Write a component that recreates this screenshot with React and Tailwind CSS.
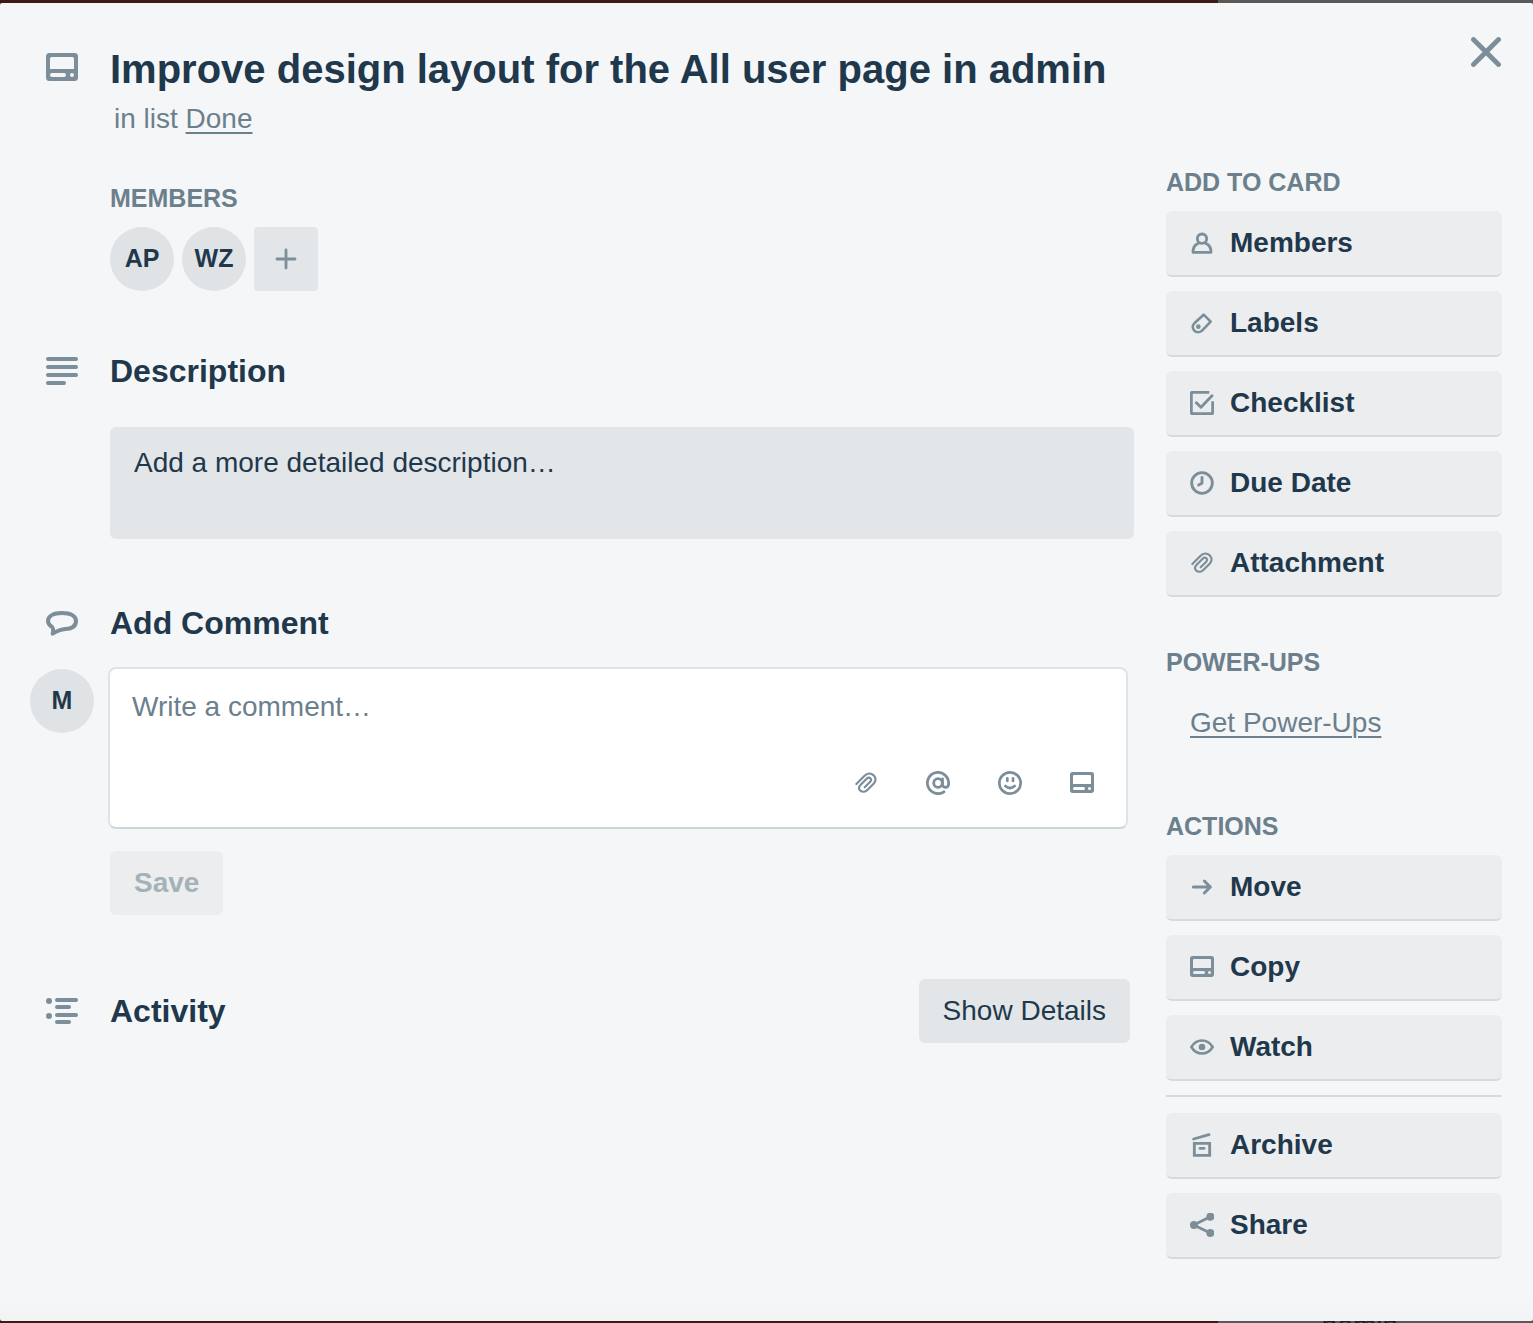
import React from "react";

const Glyph = ({ box = "0 0 72 72", className = "size-6", weight = 8.5, children }) => (
  <svg
    viewBox={box}
    className={`${className} shrink-0 text-[#7b8e99]`}
    fill="none"
    stroke="currentColor"
    strokeWidth={weight}
    strokeLinecap="round"
    strokeLinejoin="round"
    aria-hidden="true"
  >
    {children}
  </svg>
);

const CardIcon = ({ className, box = "0 -1.333 32 32" }) => (
  <Glyph box={box} className={className}>
    <path
      fill="currentColor"
      stroke="none"
      fillRule="evenodd"
      d="M3.500 0H28.500a3.500 3.500 0 0 1 3.500 3.500V24.500a3.500 3.500 0 0 1-3.500 3.500H3.500a3.500 3.500 0 0 1-3.500-3.500V3.500a3.500 3.500 0 0 1 3.500-3.500ZM5.500 4A1.500 1.500 0 0 0 4 5.500V16H28V5.500A1.500 1.500 0 0 0 26.500 4ZM6 20a2 2 0 0 0 0 4H18a2 2 0 0 0 0-4ZM26 20a2 2 0 1 0 0 4a2 2 0 1 0 0-4Z"
    />
  </Glyph>
);

const ClipIcon = () => (
  <Glyph weight={6.5}>
    <path d="M7 39L31 15C40 6 51 6 59 13C67 21 66 31 59 38L40 57C34 63 25 64 19 59C13 53 15 46 20 41L38 23C42 19 46 19 49 22C52 25 52 29 48 33L32 49" />
  </Glyph>
);

const MemberIcon = () => (
  <Glyph weight={8.5}>
    <circle cx="36" cy="23" r="14" />
    <path d="M25 37C14 41 9 52 9 64H63C63 52 58 41 47 37" />
  </Glyph>
);

const LabelIcon = () => (
  <Glyph weight={8}>
    <path d="M41 11L62 32L37 58C30 65 20 65 13 59C7 52 7 43 13 37Z" />
    <circle cx="25" cy="47" r="7" fill="currentColor" stroke="none" />
  </Glyph>
);

const ChecklistIcon = () => (
  <Glyph>
    <path strokeLinecap="butt" d="M58 4H7Q4 4 4 7V65Q4 68 7 68H65Q68 68 68 65V31" />
    <path d="M19 35L33 49L66 14" />
  </Glyph>
);

const ClockIcon = () => (
  <Glyph>
    <circle cx="36" cy="36" r="31" />
    <path d="M36 19V37L26 42" />
  </Glyph>
);

const MoveIcon = () => (
  <Glyph weight={9}>
    <path d="M10 36H61M43 18L61 36L43 54" />
  </Glyph>
);

const WatchIcon = () => (
  <Glyph weight={8}>
    <path d="M4 36C20 10 52 10 68 36C52 62 20 62 4 36Z" />
    <circle cx="36" cy="36" r="10" fill="currentColor" stroke="none" />
  </Glyph>
);

const ArchiveIcon = () => (
  <Glyph>
    <path d="M11 18L57 5" />
    <path strokeLinejoin="miter" d="M13 31H59V67H13Z" />
    <path d="M30 46H42" />
  </Glyph>
);

const ShareIcon = () => (
  <Glyph>
    <path d="M61 11L11 36L61 60" />
    <g fill="currentColor" stroke="none">
      <circle cx="61" cy="11" r="12" />
      <circle cx="12" cy="36" r="12" />
      <circle cx="61" cy="60" r="12" />
    </g>
  </Glyph>
);

const AtIcon = () => (
  <Glyph box="0 0 24 24" weight={2.8}>
    <circle cx="12" cy="12" r="4.300" />
    <path d="M16.500 8v5.300a3 3 0 0 0 6.100 0V12a10.600 10.600 0 1 0-4.700 8.800" />
  </Glyph>
);

const SmileIcon = () => (
  <Glyph weight={8}>
    <circle cx="36" cy="36" r="32" />
    <path d="M28 22V30M45 22V30M22 45Q36 57 50 45" />
  </Glyph>
);

const Caption = ({ children }) => (
  <h3 className="mb-[13px] text-[25px] leading-8 font-bold text-[#6b808c]">{children}</h3>
);

const SideButton = ({ icon: Icon, children }) => (
  <button
    type="button"
    className="flex h-[66px] w-full items-center gap-4 rounded-md border-b-2 border-[#d5dcdd] bg-[#ecedef] px-6 text-left text-[28px] font-bold"
  >
    <Icon />
    {children}
  </button>
);

const Avatar = ({ children }) => (
  <span className="flex size-16 items-center justify-center rounded-full bg-[#dfe3e6] text-[25px] font-bold">
    {children}
  </span>
);

const Section = ({ icon, className, children }) => (
  <div className={`grid grid-cols-[64px_1fr] items-center gap-x-4 ${className}`}>
    <div className="flex justify-center">{icon}</div>
    {children}
  </div>
);

const commentTools = [
  ["Add an attachment", ClipIcon],
  ["Mention a member", AtIcon],
  ["Add emoji", SmileIcon],
  ["Add card", CardIcon],
];

export default function App() {
  return (
    <div className="flex min-h-screen flex-col bg-[linear-gradient(to_left,#595a58_315px,#3b1a17_315px)] pt-[3px] font-['Liberation_Sans',Arial,sans-serif] text-[#1f384c]">
      <div className="flex flex-1 flex-col rounded-xs bg-[linear-gradient(to_top,#f1f3f5,#f5f6f8_24px)] pr-[31px] pb-[62px] pl-[30px]">
        <header className="grid grid-cols-[64px_1fr_auto] gap-x-4 pt-[42px] pr-px">
          <div className="flex justify-center pt-2">
            <CardIcon box="0 0 32 28" className="h-7 w-8" />
          </div>
          <div>
            <h1 className="text-[40px] leading-[48px] font-bold">
              Improve design layout for the All user page in admin
            </h1>
            <p className="mt-[10px] ml-1 text-[28px] leading-8 text-[#6b808c]">
              in list{" "}
              <a href="#done" className="underline decoration-2 underline-offset-4">
                Done
              </a>
            </p>
          </div>
          <button type="button" aria-label="Close" className="-mt-2 self-start">
            <Glyph box="0 0 30 30" className="size-[30px]" weight={4.8}>
              <path d="M2.500 2.500L27.500 27.500M27.500 2.500L2.500 27.500" />
            </Glyph>
          </button>
        </header>

        <div className="flex items-start gap-8 pt-[31px]">
          <main className="min-w-0 flex-1 pt-4">
            <div className="ml-20">
              <Caption>MEMBERS</Caption>
              <div className="flex gap-2">
                <Avatar>AP</Avatar>
                <Avatar>WZ</Avatar>
                <button
                  type="button"
                  aria-label="Add member"
                  className="flex size-16 items-center justify-center rounded bg-[#e2e6e9]"
                >
                  <Glyph box="0 0 22 22" className="size-[22px]" weight={2.8}>
                    <path d="M11 2V20M2 11H20" />
                  </Glyph>
                </button>
              </div>
            </div>

            <Section
              className="mt-[60px]"
              icon={
                <Glyph box="0 0 32 28" className="h-7 w-8" weight={4}>
                  <path d="M2 2H30M2 10H30M2 18H30M2 26H18" />
                </Glyph>
              }
            >
              <h2 className="text-[32px] leading-10 font-bold">Description</h2>
            </Section>
            <div className="mt-9 ml-20">
              <button
                type="button"
                className="flex h-28 w-full items-start rounded-md bg-[#e2e6e9] px-6 py-5 text-left text-[28px] leading-8"
              >
                Add a more detailed description…
              </button>
            </div>

            <Section
              className="mt-16"
              icon={
                <Glyph box="0 0 96 75" className="h-[25px] w-8" weight={12}>
                  <path d="M20 68C22 61 22 53 19 49C9 43 6 37 6 30C6 15 22 6 48 6C74 6 90 15 90 30C90 45 78 53 58 54C45 55 33 60 20 68Z" />
                </Glyph>
              }
            >
              <h2 className="text-[32px] leading-10 font-bold">
                <label htmlFor="comment">Add Comment</label>
              </h2>
            </Section>
            <div className="mt-6 mr-1.5 flex items-start gap-3.5">
              <div className="pt-0.5">
                <Avatar>M</Avatar>
              </div>
              <div className="flex-1 rounded-lg border-2 border-[#e0e4e7] border-b-[#cfd6da] bg-white">
                <textarea
                  id="comment"
                  placeholder="Write a comment…"
                  className="block h-[88px] w-full resize-none px-[22px] pt-[22px] text-[28px] leading-8 outline-none placeholder:text-[#6b808c]"
                />
                <div className="flex h-[70px] items-start justify-end gap-12 pt-3.5 pr-8">
                  {commentTools.map(([label, Icon]) => (
                    <button key={label} type="button" aria-label={label}>
                      <Icon />
                    </button>
                  ))}
                </div>
              </div>
            </div>
            <button
              type="button"
              disabled
              className="mt-[22px] ml-20 h-16 rounded-md bg-[#ecedef] px-6 text-[28px] font-bold text-[#a5b1b8]"
            >
              Save
            </button>

            <Section
              className="mt-16 mr-1"
              icon={
                <Glyph box="0 0 96 78" className="h-[26px] w-8" weight={12}>
                  <path d="M33 6H90M33 27H69M33 51H90M33 72H69" />
                  <g fill="currentColor" stroke="none">
                    <circle cx="9" cy="9" r="9" />
                    <circle cx="9" cy="54" r="9" />
                  </g>
                </Glyph>
              }
            >
              <div className="flex items-center justify-between">
                <h2 className="text-[32px] leading-10 font-bold">Activity</h2>
                <button type="button" className="h-16 rounded-md bg-[#e2e6e9] px-6 text-[28px]">
                  Show Details
                </button>
              </div>
            </Section>
          </main>

          <aside className="w-[336px] shrink-0">
            <Caption>ADD TO CARD</Caption>
            <div className="flex flex-col gap-3.5">
              <SideButton icon={MemberIcon}>Members</SideButton>
              <SideButton icon={LabelIcon}>Labels</SideButton>
              <SideButton icon={ChecklistIcon}>Checklist</SideButton>
              <SideButton icon={ClockIcon}>Due Date</SideButton>
              <SideButton icon={ClipIcon}>Attachment</SideButton>
            </div>
            <div className="mt-[49px]">
              <Caption>POWER-UPS</Caption>
              <a
                href="#power-ups"
                className="flex h-16 items-center px-6 text-[28px] text-[#6b808c] underline decoration-2 underline-offset-4"
              >
                Get Power-Ups
              </a>
            </div>
            <div className="mt-[55px]">
              <Caption>ACTIONS</Caption>
              <div className="flex flex-col gap-3.5">
                <SideButton icon={MoveIcon}>Move</SideButton>
                <SideButton icon={CardIcon}>Copy</SideButton>
                <SideButton icon={WatchIcon}>Watch</SideButton>
              </div>
              <hr className="mt-3.5 mb-4 border-t-2 border-[#d5dcdd]" />
              <div className="flex flex-col gap-3.5">
                <SideButton icon={ArchiveIcon}>Archive</SideButton>
                <SideButton icon={ShareIcon}>Share</SideButton>
              </div>
            </div>
          </aside>
        </div>
      </div>
      <div className="flex h-0.5 justify-end overflow-hidden pr-[135px] text-[28px] leading-[10px] text-[#1b1f24]">
        <span>nomin</span>
      </div>
    </div>
  );
}
